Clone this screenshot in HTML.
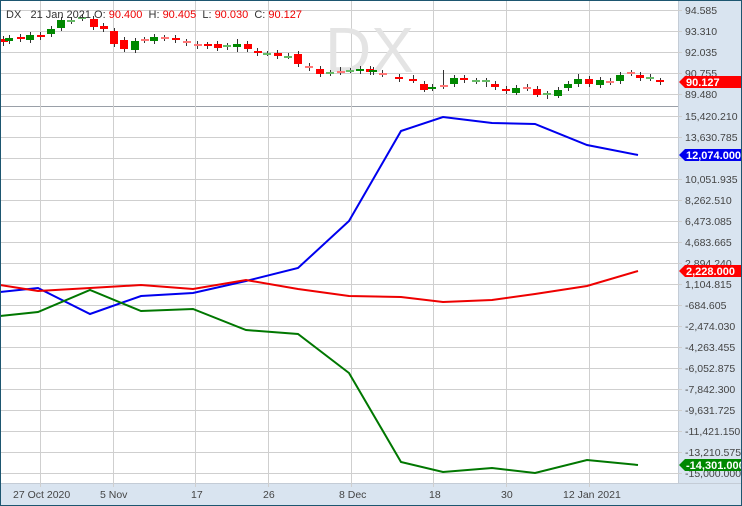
<!DOCTYPE html><html><head><style>
body{margin:0;background:#fff}
svg{display:block;font-family:"Liberation Sans",sans-serif}
</style></head><body>
<svg width="742" height="506" viewBox="0 0 742 506" xmlns="http://www.w3.org/2000/svg">
<rect x="0" y="0" width="742" height="506" fill="#fff"/>
<rect x="678" y="0" width="64" height="506" fill="#d9e4f0"/>
<rect x="0" y="483" width="742" height="23" fill="#d9e4f0"/>
<line x1="678.5" y1="0" x2="678.5" y2="483" stroke="#c4ccd6"/>
<line x1="0" y1="483.5" x2="742" y2="483.5" stroke="#c4ccd6"/>
<line x1="0" y1="106.5" x2="678" y2="106.5" stroke="#9aa0a8"/>
<g stroke="#cfcfcf" stroke-width="1">
<line x1="40.5" y1="0" x2="40.5" y2="483"/><line x1="113.5" y1="0" x2="113.5" y2="483"/><line x1="195.5" y1="0" x2="195.5" y2="483"/><line x1="268.5" y1="0" x2="268.5" y2="483"/><line x1="351.5" y1="0" x2="351.5" y2="483"/><line x1="433.5" y1="0" x2="433.5" y2="483"/><line x1="506.5" y1="0" x2="506.5" y2="483"/><line x1="589.5" y1="0" x2="589.5" y2="483"/>
<line x1="0" y1="10.5" x2="682" y2="10.5"/><line x1="0" y1="31.5" x2="682" y2="31.5"/><line x1="0" y1="52.5" x2="682" y2="52.5"/><line x1="0" y1="73.5" x2="682" y2="73.5"/><line x1="0" y1="94.5" x2="682" y2="94.5"/>
<line x1="0" y1="116.5" x2="682" y2="116.5"/><line x1="0" y1="137.5" x2="682" y2="137.5"/><line x1="0" y1="158.5" x2="682" y2="158.5"/><line x1="0" y1="179.5" x2="682" y2="179.5"/><line x1="0" y1="200.5" x2="682" y2="200.5"/><line x1="0" y1="221.5" x2="682" y2="221.5"/><line x1="0" y1="242.5" x2="682" y2="242.5"/><line x1="0" y1="263.5" x2="682" y2="263.5"/><line x1="0" y1="284.5" x2="682" y2="284.5"/><line x1="0" y1="305.5" x2="682" y2="305.5"/><line x1="0" y1="326.5" x2="682" y2="326.5"/><line x1="0" y1="347.5" x2="682" y2="347.5"/><line x1="0" y1="368.5" x2="682" y2="368.5"/><line x1="0" y1="389.5" x2="682" y2="389.5"/><line x1="0" y1="410.5" x2="682" y2="410.5"/><line x1="0" y1="431.5" x2="682" y2="431.5"/><line x1="0" y1="452.5" x2="682" y2="452.5"/><line x1="0" y1="473.5" x2="682" y2="473.5"/>
<line x1="40.5" y1="483" x2="40.5" y2="487"/><line x1="113.5" y1="483" x2="113.5" y2="487"/><line x1="195.5" y1="483" x2="195.5" y2="487"/><line x1="268.5" y1="483" x2="268.5" y2="487"/><line x1="351.5" y1="483" x2="351.5" y2="487"/><line x1="433.5" y1="483" x2="433.5" y2="487"/><line x1="506.5" y1="483" x2="506.5" y2="487"/><line x1="589.5" y1="483" x2="589.5" y2="487"/>
</g>
<text x="325" y="72" font-size="64" fill="#e4e4e4">DX</text>
<g stroke="#333" stroke-width="1">
<path d="M3.5 36V46M9.5 35V44M20.5 34V42M30.5 32V43M40.5 32V40M51.5 26V37M61.5 17V31M71.5 17V24M82.5 14V21M93.5 16V30M103.5 23V32M114.5 28V47M124.5 37V52M135.5 38V53M144.5 37V43M154.5 34V44M164.5 35V41M175.5 35V43M186.5 39V46M197.5 41V49M207.5 42V49M217.5 41V51M227.5 43V50M237.5 39V52M247.5 41V52M257.5 48V56M267.5 51V56M277.5 50V59M288.5 53V59M298.5 51V67M309.5 63V71M320.5 66V77M330.5 70V76M340.5 67V75M350.5 68V73M360.5 66V74M370.5 66V75M373.5 67V75M382.5 70V77M399.5 74V82M413.5 75V83M424.5 81V92M432.5 84V91M443.5 70V89M454.5 75V87M464.5 75V83M476.5 78V84M486.5 78V87M495.5 81V90M506.5 86V94M516.5 85V95M527.5 84V91M537.5 86V97M547.5 91V99M558.5 87V98M568.5 81V91M578.5 74V87M589.5 76V87M600.5 77V88M610.5 78V85M620.5 72V84M631.5 70V76M640.5 72V81M650.5 74V81M660.5 78V85"/>
</g>
<g fill="#f00">
<rect x="0" y="39" width="8" height="3"/><rect x="17" y="37" width="8" height="2"/><rect x="37" y="35" width="8" height="2"/><rect x="90" y="19" width="8" height="8"/><rect x="100" y="26" width="8" height="3"/><rect x="110" y="31" width="8" height="13"/><rect x="120" y="40" width="8" height="9"/><rect x="172" y="38" width="8" height="2"/><rect x="204" y="44" width="8" height="2"/><rect x="214" y="44" width="8" height="4"/><rect x="244" y="44" width="8" height="5"/><rect x="254" y="51" width="8" height="2"/><rect x="274" y="53" width="8" height="3"/><rect x="294" y="54" width="8" height="10"/><rect x="316" y="69" width="8" height="5"/><rect x="366" y="69" width="8" height="3"/><rect x="395" y="77" width="8" height="2"/><rect x="409" y="79" width="8" height="2"/><rect x="420" y="84" width="8" height="6"/><rect x="460" y="78" width="8" height="2"/><rect x="491" y="84" width="8" height="3"/><rect x="502" y="89" width="8" height="2"/><rect x="533" y="89" width="8" height="6"/><rect x="585" y="79" width="8" height="5"/><rect x="636" y="75" width="8" height="3"/><rect x="656" y="80" width="8" height="2"/>
</g>
<g fill="#f77">
<rect x="141" y="39" width="8" height="2"/><rect x="161" y="37" width="8" height="2"/><rect x="183" y="41" width="8" height="2"/><rect x="194" y="44" width="8" height="2"/><rect x="305" y="66" width="8" height="2"/><rect x="337" y="71" width="8" height="2"/><rect x="379" y="73" width="8" height="2"/><rect x="440" y="85" width="8" height="2"/><rect x="523" y="87" width="8" height="2"/><rect x="606" y="81" width="8" height="2"/><rect x="627" y="72" width="8" height="2"/>
</g>
<g fill="#080">
<rect x="5" y="38" width="8" height="3"/><rect x="26" y="35" width="8" height="5"/><rect x="47" y="29" width="8" height="5"/><rect x="57" y="20" width="8" height="8"/><rect x="131" y="41" width="8" height="9"/><rect x="150" y="37" width="8" height="4"/><rect x="233" y="44" width="8" height="3"/><rect x="356" y="69" width="8" height="2"/><rect x="369" y="70" width="8" height="2"/><rect x="428" y="87" width="8" height="2"/><rect x="450" y="78" width="8" height="6"/><rect x="512" y="88" width="8" height="5"/><rect x="554" y="90" width="8" height="6"/><rect x="564" y="84" width="8" height="4"/><rect x="574" y="79" width="8" height="5"/><rect x="596" y="80" width="8" height="5"/><rect x="616" y="75" width="8" height="6"/>
</g>
<g fill="#6b6">
<rect x="67" y="20" width="8" height="2"/><rect x="78" y="17" width="8" height="2"/><rect x="223" y="45" width="8" height="2"/><rect x="263" y="53" width="8" height="2"/><rect x="284" y="56" width="8" height="2"/><rect x="326" y="72" width="8" height="2"/><rect x="346" y="70" width="8" height="2"/><rect x="472" y="80" width="8" height="2"/><rect x="482" y="80" width="8" height="2"/><rect x="543" y="93" width="8" height="2"/><rect x="646" y="77" width="8" height="2"/>
</g>
<text x="6" y="18" font-size="11" fill="#333">DX &#160;&#160;21 Jan 2021 O: <tspan fill="#e00">90.400</tspan> &#160;H: <tspan fill="#e00">90.405</tspan> &#160;L: <tspan fill="#e00">90.030</tspan> &#160;C: <tspan fill="#e00">90.127</tspan></text>
<g fill="none" stroke-width="2">
<polyline stroke="#0000ee" points="0,292 38,288 90,314 141,296 193,293 246,281 298,268 349,221 401,131 443,117 492,123 535,124 587,145 638,155"/>
<polyline stroke="#ee0000" points="0,285 38,291 90,288 141,285 193,289 246,280 298,289 349,296 401,297 443,302 492,300 535,294 587,286 638,271"/>
<polyline stroke="#007700" points="0,316 38,312 90,290 141,311 193,309 246,330 298,334 349,373 401,462 443,472 492,468 535,473 587,460 638,465"/>
</g>
<g font-size="10.5" fill="#444">
<text x="685" y="14">94.585</text><text x="685" y="35">93.310</text><text x="685" y="56">92.035</text><text x="685" y="77">90.755</text><text x="685" y="98">89.480</text>
<text x="685" y="120">15,420.210</text><text x="685" y="141">13,630.785</text><text x="685" y="183">10,051.935</text><text x="685" y="204">8,262.510</text><text x="685" y="225">6,473.085</text><text x="685" y="246">4,683.665</text><text x="685" y="267">2,894.240</text><text x="685" y="288">1,104.815</text><text x="685" y="309">-684.605</text><text x="685" y="330">-2,474.030</text><text x="685" y="351">-4,263.455</text><text x="685" y="372">-6,052.875</text><text x="685" y="393">-7,842.300</text><text x="685" y="414">-9,631.725</text><text x="685" y="435">-11,421.150</text><text x="685" y="456">-13,210.575</text><text x="685" y="477">-15,000.000</text>
<text x="13" y="498">27 Oct 2020</text><text x="100" y="498">5 Nov</text><text x="191" y="498">17</text><text x="263" y="498">26</text><text x="339" y="498">8 Dec</text><text x="429" y="498">18</text><text x="501" y="498">30</text><text x="563" y="498">12 Jan 2021</text>
</g>
<g font-size="11" font-weight="bold" fill="#fff">
<path d="M679,82 L685,76 L742,76 L742,88 L685,88Z" fill="#f00"/><text x="686" y="86">90.127</text>
<path d="M679,155 L685,149 L742,149 L742,161 L685,161Z" fill="#0000ee"/><text x="686" y="159">12,074.000</text>
<path d="M679,271 L685,265 L742,265 L742,277 L685,277Z" fill="#f00"/><text x="686" y="275">2,228.000</text>
<path d="M679,465 L685,459 L742,459 L742,471 L685,471Z" fill="#080"/><text x="686" y="469">-14,301.000</text>
</g>
<rect x="0.5" y="0.5" width="741" height="505" fill="none" stroke="#1d5670"/>
</svg>
</body></html>
